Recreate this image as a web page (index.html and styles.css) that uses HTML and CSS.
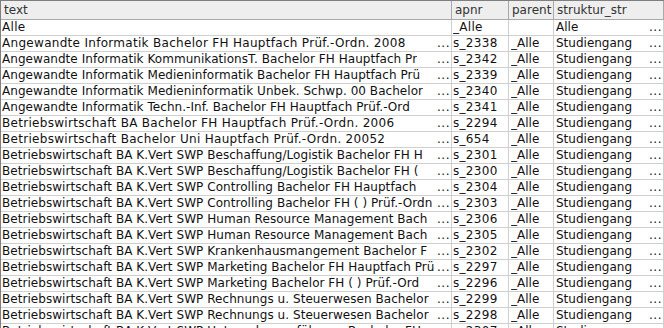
FILE: index.html
```html
<!DOCTYPE html>
<html>
<head>
<meta charset="utf-8">
<link rel="stylesheet" href="styles.css">
</head>
<body>
<div class="table">
  <div class="row head">
    <div class="cell c1">text</div>
    <div class="cell c2">apnr</div>
    <div class="cell c3">parent</div>
    <div class="cell c4">struktur_str</div>
  </div>
  <div class="row">
    <div class="cell c1"><span class="v">Alle</span></div>
    <div class="cell c2"><span class="v">_Alle</span></div>
    <div class="cell c3"><span class="v"></span></div>
    <div class="cell c4"><span class="v">Alle</span><span class="d">...</span></div>
  </div>
  <div class="row">
    <div class="cell c1"><span class="v">Angewandte Informatik Bachelor FH Hauptfach Prüf.-Ordn. 2008</span><span class="d">...</span></div>
    <div class="cell c2"><span class="v">s_2338</span></div>
    <div class="cell c3"><span class="v">_Alle</span></div>
    <div class="cell c4"><span class="v">Studiengang</span><span class="d">...</span></div>
  </div>
  <div class="row">
    <div class="cell c1 tr"><span class="v">Angewandte Informatik KommunikationsT. Bachelor FH Hauptfach Pr</span><span class="d">...</span></div>
    <div class="cell c2"><span class="v">s_2342</span></div>
    <div class="cell c3"><span class="v">_Alle</span></div>
    <div class="cell c4"><span class="v">Studiengang</span><span class="d">...</span></div>
  </div>
  <div class="row">
    <div class="cell c1 tr"><span class="v">Angewandte Informatik Medieninformatik Bachelor FH Hauptfach Prü</span><span class="d">...</span></div>
    <div class="cell c2"><span class="v">s_2339</span></div>
    <div class="cell c3"><span class="v">_Alle</span></div>
    <div class="cell c4"><span class="v">Studiengang</span><span class="d">...</span></div>
  </div>
  <div class="row">
    <div class="cell c1 tr"><span class="v">Angewandte Informatik Medieninformatik Unbek. Schwp. 00 Bachelor</span><span class="d">...</span></div>
    <div class="cell c2"><span class="v">s_2340</span></div>
    <div class="cell c3"><span class="v">_Alle</span></div>
    <div class="cell c4"><span class="v">Studiengang</span><span class="d">...</span></div>
  </div>
  <div class="row">
    <div class="cell c1 tr"><span class="v">Angewandte Informatik Techn.-Inf. Bachelor FH Hauptfach Prüf.-Ord</span><span class="d">...</span></div>
    <div class="cell c2"><span class="v">s_2341</span></div>
    <div class="cell c3"><span class="v">_Alle</span></div>
    <div class="cell c4"><span class="v">Studiengang</span><span class="d">...</span></div>
  </div>
  <div class="row">
    <div class="cell c1"><span class="v">Betriebswirtschaft BA Bachelor FH Hauptfach Prüf.-Ordn. 2006</span><span class="d">...</span></div>
    <div class="cell c2"><span class="v">s_2294</span></div>
    <div class="cell c3"><span class="v">_Alle</span></div>
    <div class="cell c4"><span class="v">Studiengang</span><span class="d">...</span></div>
  </div>
  <div class="row">
    <div class="cell c1"><span class="v">Betriebswirtschaft Bachelor Uni Hauptfach Prüf.-Ordn. 20052</span><span class="d">...</span></div>
    <div class="cell c2"><span class="v">s_654</span></div>
    <div class="cell c3"><span class="v">_Alle</span></div>
    <div class="cell c4"><span class="v">Studiengang</span><span class="d">...</span></div>
  </div>
  <div class="row">
    <div class="cell c1 tr"><span class="v">Betriebswirtschaft BA K.Vert SWP Beschaffung/Logistik Bachelor FH H</span><span class="d">...</span></div>
    <div class="cell c2"><span class="v">s_2301</span></div>
    <div class="cell c3"><span class="v">_Alle</span></div>
    <div class="cell c4"><span class="v">Studiengang</span><span class="d">...</span></div>
  </div>
  <div class="row">
    <div class="cell c1 tr"><span class="v">Betriebswirtschaft BA K.Vert SWP Beschaffung/Logistik Bachelor FH (</span><span class="d">...</span></div>
    <div class="cell c2"><span class="v">s_2300</span></div>
    <div class="cell c3"><span class="v">_Alle</span></div>
    <div class="cell c4"><span class="v">Studiengang</span><span class="d">...</span></div>
  </div>
  <div class="row">
    <div class="cell c1 tr"><span class="v">Betriebswirtschaft BA K.Vert SWP Controlling Bachelor FH Hauptfach</span><span class="d">...</span></div>
    <div class="cell c2"><span class="v">s_2304</span></div>
    <div class="cell c3"><span class="v">_Alle</span></div>
    <div class="cell c4"><span class="v">Studiengang</span><span class="d">...</span></div>
  </div>
  <div class="row">
    <div class="cell c1 tr"><span class="v">Betriebswirtschaft BA K.Vert SWP Controlling Bachelor FH ( ) Prüf.-Ordn</span><span class="d">...</span></div>
    <div class="cell c2"><span class="v">s_2303</span></div>
    <div class="cell c3"><span class="v">_Alle</span></div>
    <div class="cell c4"><span class="v">Studiengang</span><span class="d">...</span></div>
  </div>
  <div class="row">
    <div class="cell c1 tr"><span class="v">Betriebswirtschaft BA K.Vert SWP Human Resource Management Bach</span><span class="d">...</span></div>
    <div class="cell c2"><span class="v">s_2306</span></div>
    <div class="cell c3"><span class="v">_Alle</span></div>
    <div class="cell c4"><span class="v">Studiengang</span><span class="d">...</span></div>
  </div>
  <div class="row">
    <div class="cell c1 tr"><span class="v">Betriebswirtschaft BA K.Vert SWP Human Resource Management Bach</span><span class="d">...</span></div>
    <div class="cell c2"><span class="v">s_2305</span></div>
    <div class="cell c3"><span class="v">_Alle</span></div>
    <div class="cell c4"><span class="v">Studiengang</span><span class="d">...</span></div>
  </div>
  <div class="row">
    <div class="cell c1 tr"><span class="v">Betriebswirtschaft BA K.Vert SWP Krankenhausmangement Bachelor F</span><span class="d">...</span></div>
    <div class="cell c2"><span class="v">s_2302</span></div>
    <div class="cell c3"><span class="v">_Alle</span></div>
    <div class="cell c4"><span class="v">Studiengang</span><span class="d">...</span></div>
  </div>
  <div class="row">
    <div class="cell c1 tr"><span class="v">Betriebswirtschaft BA K.Vert SWP Marketing Bachelor FH Hauptfach Prü</span><span class="d">...</span></div>
    <div class="cell c2"><span class="v">s_2297</span></div>
    <div class="cell c3"><span class="v">_Alle</span></div>
    <div class="cell c4"><span class="v">Studiengang</span><span class="d">...</span></div>
  </div>
  <div class="row">
    <div class="cell c1 tr"><span class="v">Betriebswirtschaft BA K.Vert SWP Marketing Bachelor FH ( ) Prüf.-Ord</span><span class="d">...</span></div>
    <div class="cell c2"><span class="v">s_2296</span></div>
    <div class="cell c3"><span class="v">_Alle</span></div>
    <div class="cell c4"><span class="v">Studiengang</span><span class="d">...</span></div>
  </div>
  <div class="row">
    <div class="cell c1 tr"><span class="v">Betriebswirtschaft BA K.Vert SWP Rechnungs u. Steuerwesen Bachelor</span><span class="d">...</span></div>
    <div class="cell c2"><span class="v">s_2299</span></div>
    <div class="cell c3"><span class="v">_Alle</span></div>
    <div class="cell c4"><span class="v">Studiengang</span><span class="d">...</span></div>
  </div>
  <div class="row">
    <div class="cell c1 tr"><span class="v">Betriebswirtschaft BA K.Vert SWP Rechnungs u. Steuerwesen Bachelor</span><span class="d">...</span></div>
    <div class="cell c2"><span class="v">s_2298</span></div>
    <div class="cell c3"><span class="v">_Alle</span></div>
    <div class="cell c4"><span class="v">Studiengang</span><span class="d">...</span></div>
  </div>
  <div class="row">
    <div class="cell c1 tr"><span class="v">Betriebswirtschaft BA K.Vert SWP Unternehmensführung Bachelor FH</span><span class="d">...</span></div>
    <div class="cell c2"><span class="v">s_2307</span></div>
    <div class="cell c3"><span class="v">_Alle</span></div>
    <div class="cell c4"><span class="v">Studiengang</span><span class="d">...</span></div>
  </div>
</div>
</body>
</html>
```

FILE: styles.css
```css
html, body {
  margin: 0;
  padding: 0;
  background: #ffffff;
  overflow: hidden;
}

.table {
  width: 664px;
  height: 328px;
  overflow: hidden;
  font-family: "DejaVu Sans", sans-serif;
  font-size: 12px;
  color: #111111;
  border-left: 1px solid #7f7f7f;
  box-sizing: border-box;
}

.row {
  display: grid;
  grid-template-columns: 451px 57px 45px 110px;
  height: 16px;
}

.cell {
  display: flex;
  align-items: center;
  box-sizing: border-box;
  height: 16px;
  border-right: 1px solid #d0d0d0;
  border-bottom: 1px solid #d0d0d0;
  padding-left: 1px;
  padding-right: 1px;
  line-height: 15px;
  white-space: pre;
  overflow: hidden;
}

.c1, .c2 {
  letter-spacing: 0.3px;
}

.c1.tr {
  letter-spacing: 0.05px;
}

.c3 {
  padding-left: 2px;
}

.c4 {
  padding-left: 2px;
}

.v {
  flex: 0 1 auto;
  min-width: 0;
  overflow: hidden;
  white-space: pre;
}

.d {
  flex: 0 0 auto;
  margin-left: auto;
  padding-left: 1px;
  letter-spacing: 0.5px;
}

.head {
  height: 20px;
  background: #eeeeee;
  border-top: 1px solid #7f7f7f;
  box-sizing: border-box;
}

.head .cell {
  height: 19px;
  color: #333333;
  padding-left: 3px;
  letter-spacing: 0;
  border-right: 1px solid #a9a9a9;
  border-bottom: 1px solid #a9a9a9;
}
```
